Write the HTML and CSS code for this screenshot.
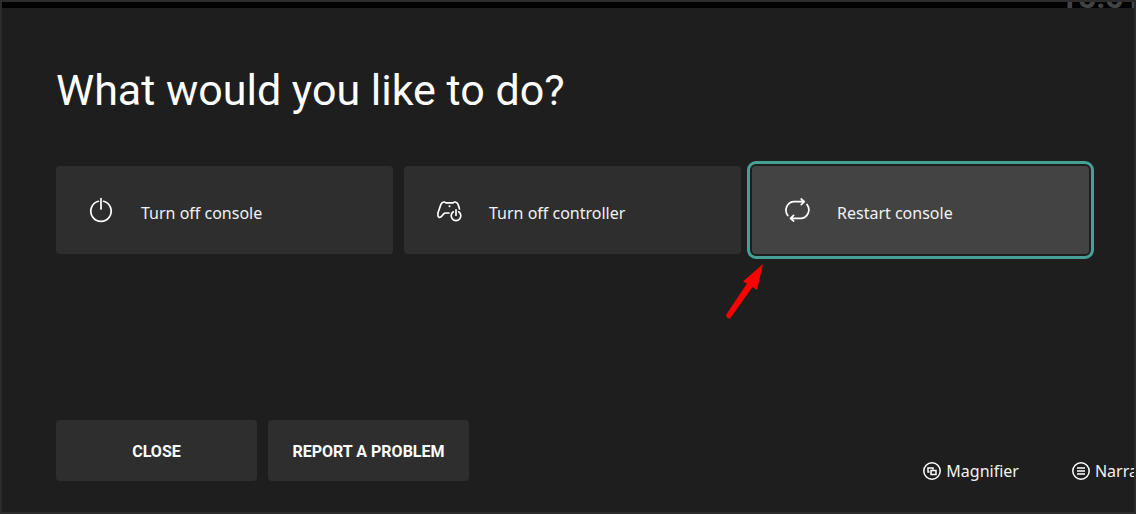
FILE: index.html
```html
<!DOCTYPE html>
<html lang="en">
<head>
	<meta charset="UTF-8">
	<meta name="viewport" content="width=device-width, initial-scale=1">
	<title>Power options</title>
	<link rel="stylesheet" href="styles.css">
</head>
<body>
<div class="status-bar">
	<span class="clock">15:51</span>
</div>
<main class="dialog">
	<h1>What would you like to do?</h1>
	<div class="options">
		<button class="option" type="button">
			<svg class="option-icon" viewBox="0 0 28 28">
				<path d="M11.4 5.3A10.2 10.2 0 1 0 16.6 5.3M14 2.5V13"/>
			</svg>
			<span>Turn off console</span>
		</button>
		<button class="option" type="button">
			<svg class="option-icon" viewBox="0 0 28 28">
				<path d="M24.500 13L23.300 9Q22.500 6.600 21 6.200Q19.500 5.600 18.100 6.800H10.900Q9.500 5.600 8 6.200Q6.500 6.600 5.700 9L3.100 16.500Q2.300 20.600 4.100 21.400Q5.500 21.800 6.900 20L8.800 17.700Q9.500 17 10.700 17H14"/>
				<path d="M18.300 15.800A4.800 4.800 0 1 0 23.700 15.800M21 13.800V19.200"/>
				<circle class="dot" cx="14.500" cy="10.200" r="1"/>
			</svg>
			<span>Turn off controller</span>
		</button>
		<div class="option-focus">
			<button class="option selected" type="button">
				<svg class="option-icon" viewBox="0 0 28 28">
					<path d="M4.800 19.500A8.600 8.600 0 0 1 10.500 5.700H21M18.200 3L21.300 5.700L18.200 8.700"/>
					<path d="M24 8.500A8.600 8.600 0 0 1 18.300 22.300H7.800M10.600 19.300L7.500 22.300L10.600 25"/>
				</svg>
				<span>Restart console</span>
			</button>
			<svg class="arrow" viewBox="0 0 40 56">
				<path d="M2 52L23 20.500L19 18.500L39 1L33 27L28.500 24L6 55.500Q3 56 2 52Z"/>
			</svg>
		</div>
	</div>
	<div class="footer">
		<div class="actions">
			<button class="action" type="button">CLOSE</button>
			<button class="action" type="button">REPORT A PROBLEM</button>
		</div>
		<div class="hints">
			<a class="hint" href="#magnifier">
				<svg class="hint-icon" viewBox="0 0 18 18">
					<circle cx="9" cy="9" r="8.200"/>
					<path d="M6.500 10H5V6H10V7.500M8 8.500H13V12.500H8Z"/>
				</svg>
				Magnifier
			</a>
			<a class="hint" href="#narrator">
				<svg class="hint-icon" viewBox="0 0 18 18">
					<circle cx="9" cy="9" r="8.200"/>
					<path d="M5 6H13M5 9H13M5 12H13"/>
				</svg>
				Narrator
			</a>
		</div>
	</div>
</main>
</body>
</html>
```
FILE: styles.css
```css
* {
	box-sizing: border-box;
	margin: 0;
	padding: 0;
}

body {
	display: flex;
	flex-direction: column;
	min-height: 100vh;
	border: 2px solid #2c2c2c;
	background: #1e1e1e;
	color: #ffffff;
	font-family: "Noto Sans", sans-serif;
	overflow: hidden;
}

/* only the bottom edge of the clock shows above the dialog */
.status-bar {
	display: flex;
	justify-content: flex-end;
	align-items: flex-end;
	height: 6px;
	background: #000000;
	overflow: hidden;
}

.clock {
	margin-right: -8px;
	color: #444444;
	font: bold 32px/22px Roboto, sans-serif;
}

.dialog {
	flex: 1;
	display: flex;
	flex-direction: column;
	padding: 54px 45px 31px 54px;
}

h1 {
	font: 400 43px/56px Roboto, sans-serif;
}

.options {
	display: grid;
	grid-template-columns: repeat(3, 1fr);
	gap: 11px;
	margin-top: 48px;
}

button {
	border: none;
	border-radius: 4px;
	background: #2e2e2e;
	color: #ffffff;
	cursor: pointer;
}

.option {
	display: flex;
	align-items: center;
	gap: 26px;
	width: 100%;
	height: 88px;
	padding: 0 31px;
	color: #f2f2f2;
	font: 16px/24px "Noto Sans", sans-serif;
	text-align: left;
}

.option span {
	padding-top: 6px;
}

.option-icon {
	width: 28px;
	height: 28px;
	fill: none;
	stroke: #ffffff;
	stroke-width: 1.7;
	stroke-linecap: round;
	stroke-linejoin: round;
}

.option-icon .dot {
	fill: #ffffff;
	stroke: none;
}

.option-focus {
	position: relative;
}

.selected {
	background: #434343;
	outline: 3px solid #46a095;
	outline-offset: 2px;
}

.arrow {
	position: absolute;
	top: 97px;
	left: -28px;
	width: 40px;
	height: 56px;
	fill: #ff0000;
}

.footer {
	display: flex;
	justify-content: space-between;
	margin-top: auto;
}

.actions {
	display: flex;
	gap: 11px;
}

.action {
	width: 201px;
	height: 61px;
	padding-top: 2px;
	font: bold 16px/24px Roboto, sans-serif;
}

.hints {
	display: flex;
	align-items: flex-end;
	gap: 53px;
	margin: 0 -71px -2px 0;
}

.hint {
	display: flex;
	align-items: center;
	gap: 5px;
	color: #f2f2f2;
	font-size: 16px;
	line-height: 24px;
	text-decoration: none;
}

.hint-icon {
	width: 18px;
	height: 18px;
	fill: none;
	stroke: #ffffff;
	stroke-width: 1.5;
}
```
